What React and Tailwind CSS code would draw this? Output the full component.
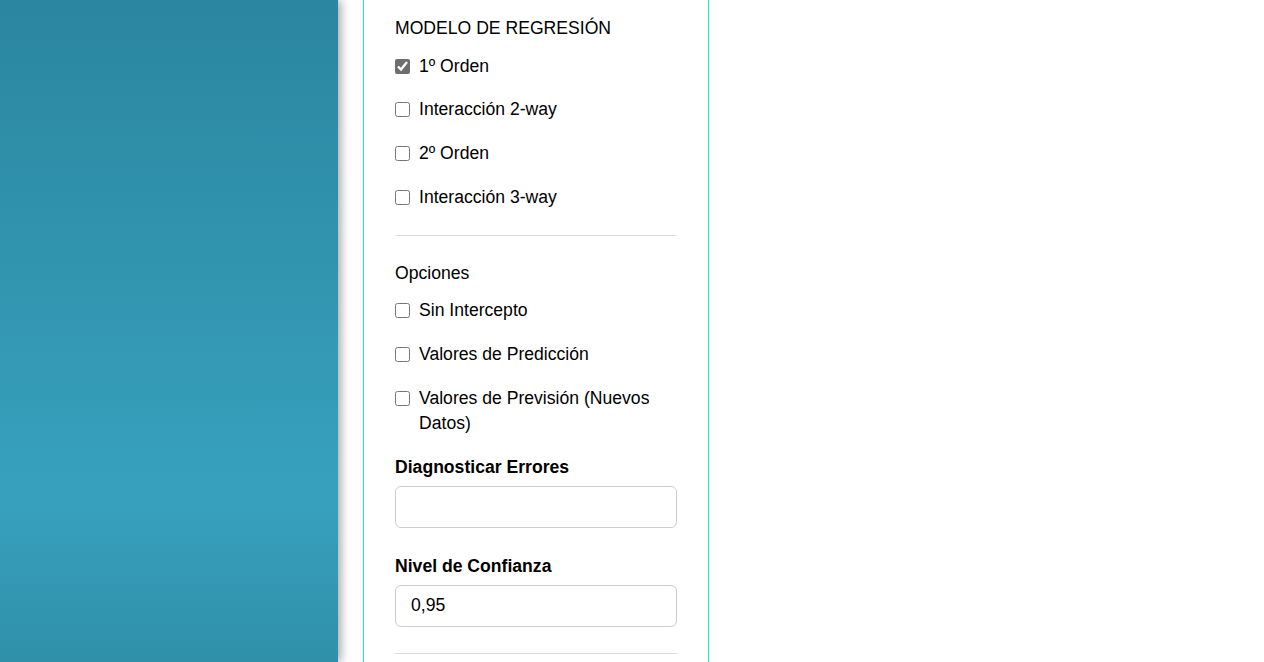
import React from 'react';

const modelOptions = [
  { label: '1º Orden', checked: true },
  { label: 'Interacción 2-way', checked: false },
  { label: '2º Orden', checked: false },
  { label: 'Interacción 3-way', checked: false },
];

const extraOptions = [
  { label: 'Sin Intercepto', checked: false },
  { label: 'Valores de Predicción', checked: false },
  { label: 'Valores de Previsión (Nuevos Datos)', checked: false },
];

const CheckRow = ({ label, checked }) => (
  <label className="flex items-start gap-[9px] py-[9.4px] leading-[25px]">
    <input
      type="checkbox"
      defaultChecked={checked}
      className="mt-[5px] h-[15px] w-[15px] shrink-0 accent-[#6e6e6e]"
    />
    <span>{label}</span>
  </label>
);

const App = () => {
  return (
    <div
      className="flex h-[662px] w-full overflow-hidden bg-white text-[17.6px] text-black"
      style={{ fontFamily: '"Liberation Sans", Arial, sans-serif' }}
    >
      <aside className="relative z-10 w-[338px] shrink-0 bg-[linear-gradient(to_bottom,#2b86a0_0%,#37a1bd_75%,#3090aa_100%)] shadow-[3px_0_9px_rgba(0,0,0,0.35)]" />

      <div className="pl-[25px]">
        <div className="h-full w-[346px] border-x border-[#1ee6cf] px-[31px]">
          <h3 className="pt-[16px] leading-[25px] font-normal">MODELO DE REGRESIÓN</h3>
          <div className="mt-[3.2px]">
            {modelOptions.map((opt) => (
              <CheckRow key={opt.label} {...opt} />
            ))}
          </div>

          <hr className="mt-[16px] border-t border-[#dcdcdc]" />

          <h4 className="mt-[25px] leading-[25px]">Opciones</h4>
          <div className="mt-[2.5px]">
            {extraOptions.map((opt) => (
              <CheckRow key={opt.label} {...opt} />
            ))}
          </div>

          <div className="mt-[10px]">
            <p className="font-bold leading-[25px]">Diagnosticar Errores</p>
            <input
              type="text"
              className="mt-[5.7px] h-[42px] w-full rounded-md border border-[#cccccc] px-[15px] outline-none"
            />
          </div>

          <div className="mt-[26.3px]">
            <p className="font-bold leading-[25px]">Nivel de Confianza</p>
            <input
              type="text"
              defaultValue="0,95"
              className="mt-[5.7px] h-[42px] w-full rounded-md border border-[#cccccc] px-[15px] outline-none"
            />
          </div>

          <hr className="mt-[26px] border-t border-[#dcdcdc]" />
        </div>
      </div>
    </div>
  );
};

export default App;
